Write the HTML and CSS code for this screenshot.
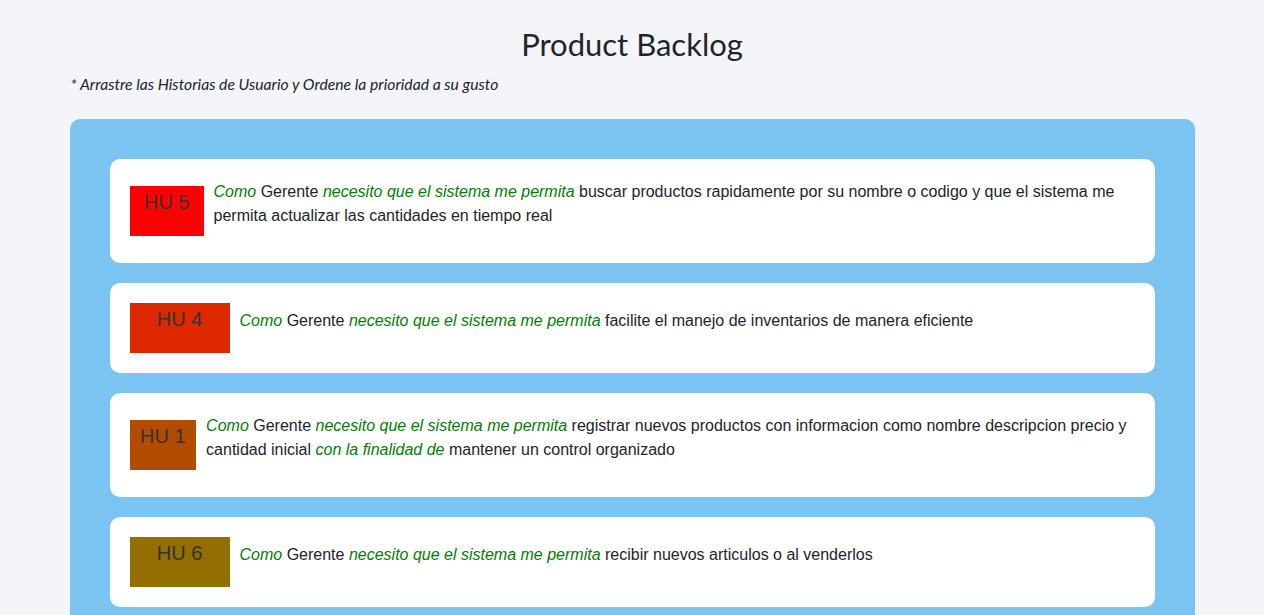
FILE: index.html
```html
<!DOCTYPE html>
<html lang="es">
<head>
<meta charset="utf-8">
<title>Product Backlog</title>
<link rel="stylesheet" href="styles.css">
</head>
<body>
<main class="page">
  <h1 class="title">Product Backlog</h1>
  <p class="hint">* Arrastre las Historias de Usuario y Ordene la prioridad a su gusto</p>
  <section class="board">
    <article class="story">
      <div class="badge b5">HU 5</div>
      <p class="text"><em>Como</em> Gerente <em>necesito que el sistema me permita</em> buscar productos rapidamente por su nombre o codigo y que el sistema me permita actualizar las cantidades en tiempo real</p>
    </article>
    <article class="story">
      <div class="badge b4">HU 4</div>
      <p class="text"><em>Como</em> Gerente <em>necesito que el sistema me permita</em> facilite el manejo de inventarios de manera eficiente</p>
    </article>
    <article class="story">
      <div class="badge b1">HU 1</div>
      <p class="text"><em>Como</em> Gerente <em>necesito que el sistema me permita</em> registrar nuevos productos con informacion como nombre descripcion precio y cantidad inicial <em>con la finalidad de</em> mantener un control organizado</p>
    </article>
    <article class="story">
      <div class="badge b6">HU 6</div>
      <p class="text"><em>Como</em> Gerente <em>necesito que el sistema me permita</em> recibir nuevos articulos o al venderlos</p>
    </article>
  </section>
</main>
</body>
</html>
```
FILE: styles.css
```css
html, body {
  margin: 0;
  padding: 0;
}
body {
  background: #f4f5f9;
  color: #212529;
  font-family: "Liberation Sans", Arial, sans-serif;
  font-size: 16px;
  line-height: 1.5;
}
.page {
  width: 1125px;
  margin: 0 auto;
  padding-top: 24px;
}
.title {
  margin: 0;
  text-align: center;
  font-family: "Lato", "Open Sans", sans-serif;
  font-weight: 400;
  font-size: 31px;
  line-height: 40px;
  color: #212529;
}
.hint {
  margin: 9px 0 24px 1px;
  font-family: "Lato", "Open Sans", sans-serif;
  font-style: italic;
  font-size: 15.7px;
  line-height: 22px;
}
.board {
  background: #7bc3f0;
  border-radius: 10px;
  padding: 40px 40px 20px;
  display: flex;
  flex-direction: column;
  gap: 20px;
}
.story {
  background: #ffffff;
  border-radius: 10px;
  padding: 20px;
  display: flex;
  align-items: center;
}
.badge {
  width: 100px;
  height: 50px;
  margin-right: 10px;
  text-align: center;
  font-size: 20px;
  line-height: 32px;
  color: #333333;
}
.b5 { background: #ff0000; }
.b4 { background: #dd2800; }
.b1 { background: #b34b00; }
.b6 { background: #926f00; }
.text {
  margin: 1px 0 15px;
}
.text em {
  color: #008000;
}
```
